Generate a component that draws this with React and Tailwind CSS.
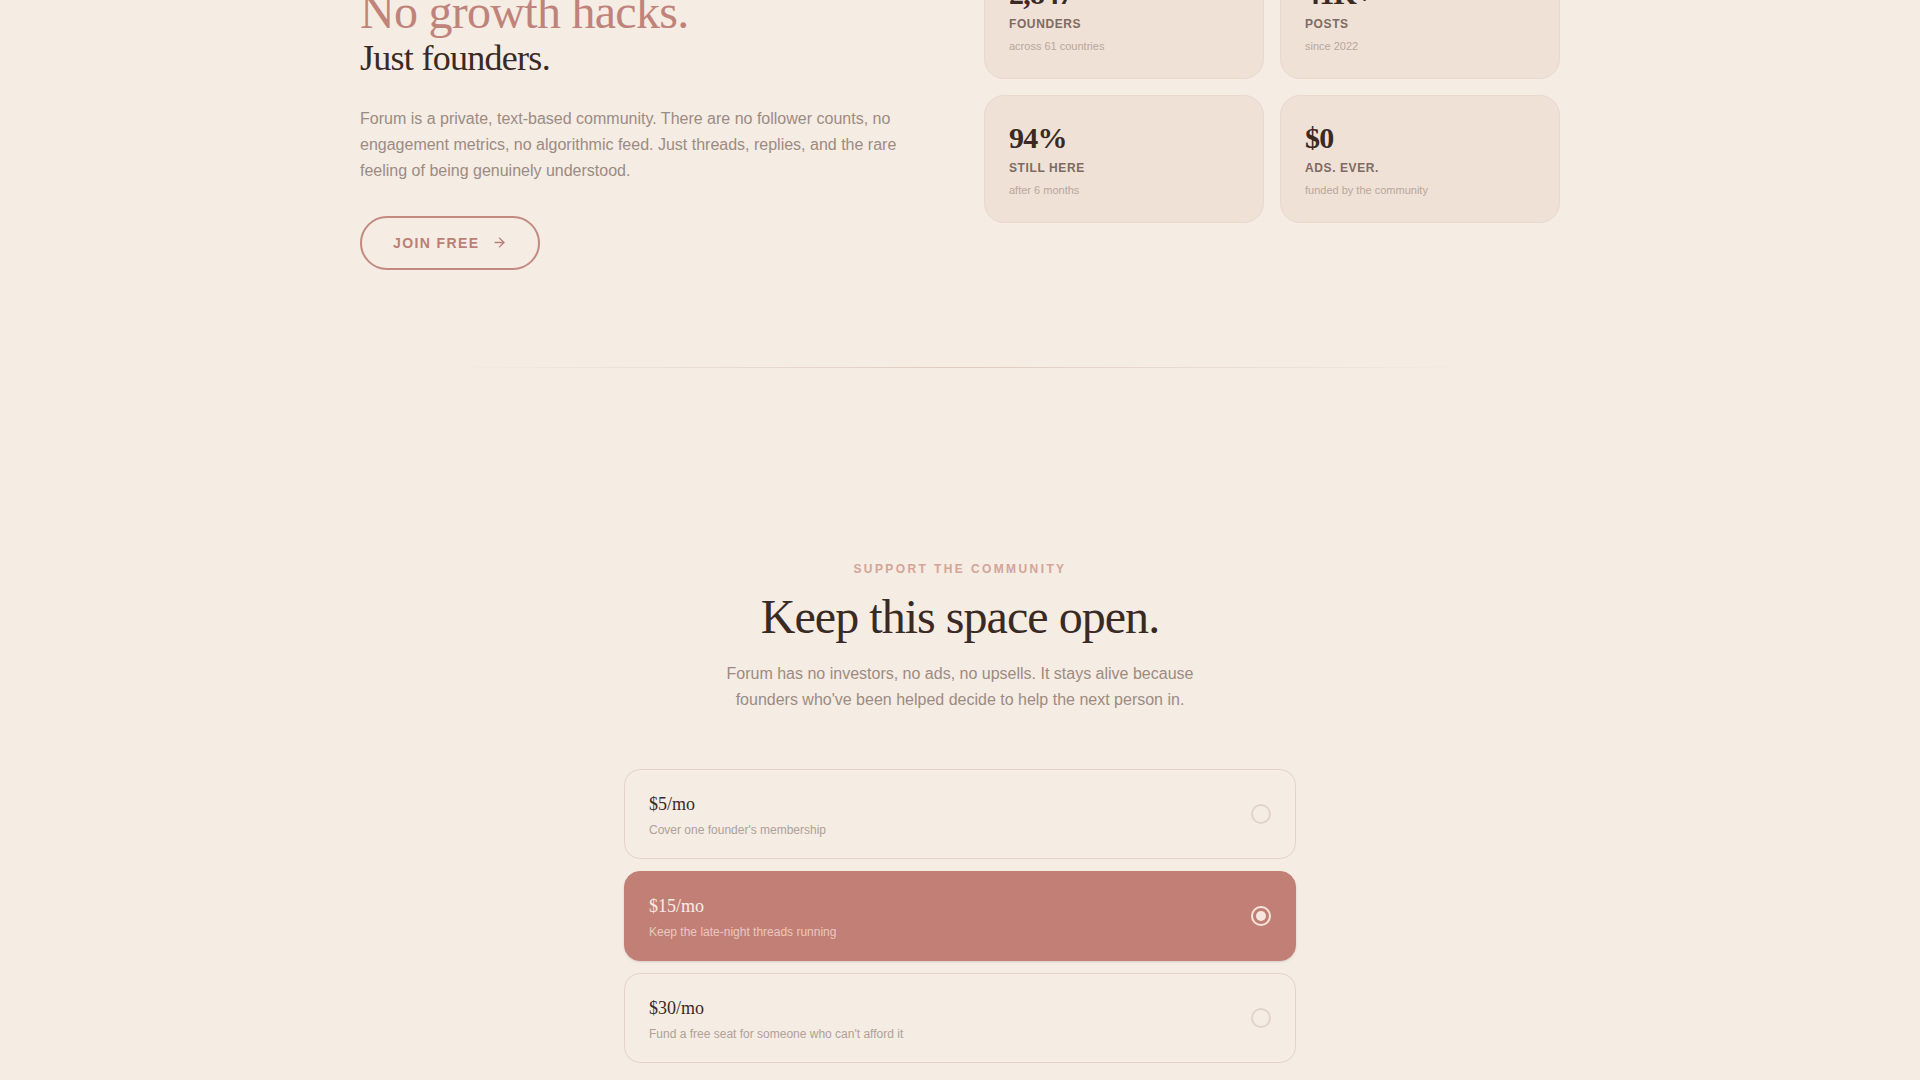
import React, { useState } from "react";
import { ArrowRight } from "lucide-react";

const serif = { fontFamily: '"Liberation Serif", "Times New Roman", serif' };

const stats = [
  { value: "2,847", label: "Founders", note: "across 61 countries" },
  { value: "41K+", label: "Posts", note: "since 2022" },
  { value: "94%", label: "Still here", note: "after 6 months" },
  { value: "$0", label: "Ads. Ever.", note: "funded by the community" },
];

const tiers = [
  { id: "5", price: "$5/mo", note: "Cover one founder's membership" },
  { id: "15", price: "$15/mo", note: "Keep the late-night threads running" },
  { id: "30", price: "$30/mo", note: "Fund a free seat for someone who can't afford it" },
];

function StatCard({ stat }) {
  return (
    <div className="rounded-[20px] border border-[#e9d9cd] bg-[#efe1d6] p-6">
      <div className="text-3xl font-bold tracking-tight text-[#3a2a24]" style={serif}>
        {stat.value}
      </div>
      <div className="mt-1 text-xs font-bold uppercase tracking-wider text-[#7d6b62]">
        {stat.label}
      </div>
      <div className="mt-1.5 text-[11px] leading-4 text-[#b8a79d]">{stat.note}</div>
    </div>
  );
}

export default function App() {
  const [selected, setSelected] = useState("15");

  return (
    <div
      className="min-h-screen overflow-hidden bg-[#f5ece4] pb-24"
      style={{ fontFamily: '"Liberation Sans", Arial, sans-serif' }}
    >
      {/* Intro + stats */}
      <section className="mx-auto -mt-[49px] grid max-w-[1200px] grid-cols-2 items-start gap-12">
        <div className="pt-[34.5px]">
          <h1 style={serif}>
            <span className="block text-5xl leading-[1.1] tracking-[-0.015em] text-[#c0837a]">
              No growth hacks.
            </span>
            <span className="block text-4xl leading-[1.15] tracking-[-0.02em] text-[#3a2a24]">
              Just founders.
            </span>
          </h1>
          <p className="mt-[26px] max-w-[545px] text-base leading-relaxed text-[#9c8b82]">
            Forum is a private, text-based community. There are no follower counts, no
            engagement metrics, no algorithmic feed. Just threads, replies, and the rare
            feeling of being genuinely understood.
          </p>
          <button className="mt-8 flex h-[54px] items-center gap-3 rounded-full border-2 border-[#c28a80] px-[31px] text-sm font-bold uppercase tracking-widest text-[#bb7f75]">
            Join free
            <ArrowRight size={15} strokeWidth={2.25} />
          </button>
        </div>

        <div className="grid grid-cols-2 gap-4">
          {stats.map((s) => (
            <StatCard key={s.label} stat={s} />
          ))}
        </div>
      </section>

      {/* Divider */}
      <div className="mx-auto mt-[97px] h-px max-w-5xl bg-gradient-to-r from-transparent via-[#dfccc0] via-50% to-transparent" />

      {/* Support */}
      <section className="mx-auto mt-[193px] max-w-2xl text-center">
        <div className="text-xs font-bold uppercase tracking-[0.2em] text-[#d3a497]">
          Support the community
        </div>
        <h2
          className="mt-3.5 text-5xl leading-[1.1] tracking-[-0.02em] text-[#3a2a24]"
          style={serif}
        >
          Keep this space open.
        </h2>
        <p className="mx-auto mt-[18px] max-w-lg text-base leading-relaxed text-[#9c8b82]">
          Forum has no investors, no ads, no upsells. It stays alive because founders
          who've been helped decide to help the next person in.
        </p>

        <div className="mt-14 flex flex-col gap-3 text-left">
          {tiers.map((t) => {
            const active = t.id === selected;
            return (
              <button
                key={t.id}
                onClick={() => setSelected(t.id)}
                className={
                  active
                    ? "flex items-center justify-between rounded-2xl border border-[#c27f76] bg-[#c27f76] px-6 py-5 text-left shadow-sm"
                    : "flex items-center justify-between rounded-2xl border border-[#e6d2c8] bg-[#f5ece4] px-6 py-5 text-left"
                }
              >
                <div>
                  <div
                    className={active ? "text-lg text-[#f8ece6]" : "text-lg text-[#3a2a24]"}
                    style={serif}
                  >
                    {t.price}
                  </div>
                  <div
                    className={
                      active ? "mt-1 text-xs text-[#ebc8bf]" : "mt-1 text-xs text-[#b0a097]"
                    }
                  >
                    {t.note}
                  </div>
                </div>
                {active ? (
                  <span className="flex h-5 w-5 items-center justify-center rounded-full border-2 border-[#f6e7de]">
                    <span className="h-2.5 w-2.5 rounded-full bg-[#f6e7de]" />
                  </span>
                ) : (
                  <span className="h-5 w-5 rounded-full border-2 border-[#e3d3ca]" />
                )}
              </button>
            );
          })}
        </div>
      </section>
    </div>
  );
}
